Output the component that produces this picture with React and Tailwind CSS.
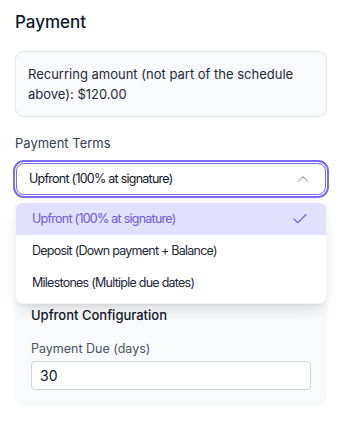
import React, { useState } from 'react';
import { Check, ChevronUp } from 'lucide-react';

const TERMS = [
  'Upfront (100% at signature)',
  'Deposit (Down payment + Balance)',
  'Milestones (Multiple due dates)',
];

export default function App() {
  const [selected, setSelected] = useState(0);
  const [open, setOpen] = useState(true);
  const [days, setDays] = useState('30');

  return (
    <div className="w-[339px] h-[448px] bg-white pl-[15px] pr-[12px] pt-[11px] font-['Inter',sans-serif] text-gray-900">
      {/* Header */}
      <h2 className="text-[17px] leading-[22px] font-medium text-gray-900">Payment</h2>

      <div className="mt-[18px] rounded-lg border border-gray-200 bg-gray-50 p-3">
        <p className="text-[13px] leading-5 text-gray-800">
          Recurring amount (not part of the schedule above): $120.00
        </p>
      </div>

      {/* Terms */}
      <label className="mt-[16px] block text-[13px] leading-5 text-gray-700">Payment Terms</label>
      <div className="relative mt-[10px] mx-px">
        <button
          onClick={() => setOpen(!open)}
          className="flex h-8 w-full items-center justify-between rounded-lg border border-[#7b6cf2] bg-white pl-3 pr-3 text-left text-[12.5px] tracking-[-0.06em] text-gray-900 ring-2 ring-[#7b6cf2] ring-offset-1"
        >
          <span>{TERMS[selected]}</span>
          <ChevronUp size={20} strokeWidth={1.25} className="text-gray-400" />
        </button>

        {open && (
          <div className="absolute left-[-1px] right-[-1px] top-[35px] z-10 rounded-lg border border-gray-100 bg-white py-1 shadow-lg">
            {TERMS.map((t, i) => (
              <button
                key={t}
                onClick={() => { setSelected(i); setOpen(false); }}
                className={`flex h-8 w-full items-center justify-between pl-4 pr-[17px] text-left text-[12.5px] tracking-[-0.06em] ${
                  i === selected ? 'bg-[#e2e1fc] text-[#6f58dc] rounded-t-md' : 'text-gray-800'
                }`}
              >
                <span>{t}</span>
                {i === selected && <Check size={18} strokeWidth={1.5} className="text-[#7b61e8]" />}
              </button>
            ))}
          </div>
        )}
      </div>

      {/* Config card */}
      <div className="mt-[94px] rounded-lg bg-gray-50 px-4 pt-4 pb-4">
        <h4 className="text-[13px] leading-5 font-medium text-gray-900">Upfront Configuration</h4>
        <label className="mt-4 block text-[12.5px] leading-4 text-gray-600">Payment Due (days)</label>
        <input
          value={days}
          onChange={(e) => setDays(e.target.value)}
          className="mt-1 block h-[29px] w-full rounded border border-gray-300 bg-white px-2 text-[14px] text-gray-900 outline-none"
        />
      </div>
    </div>
  );
}
